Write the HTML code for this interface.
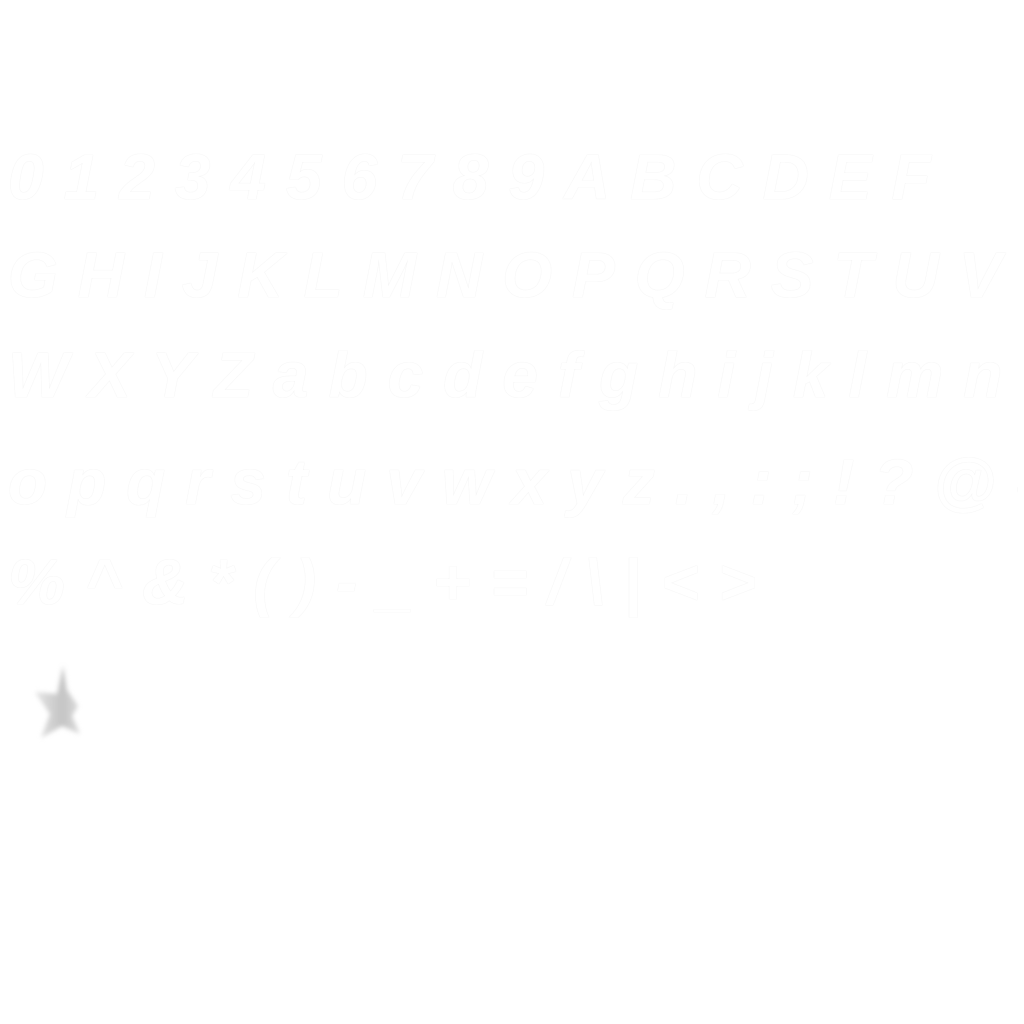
<!DOCTYPE html>
<html><head><meta charset="utf-8"><style>
html,body{margin:0;padding:0;background:#fff;width:1024px;height:1024px;overflow:hidden}
#w{position:absolute;left:0;top:0;width:1024px;height:1024px;overflow:hidden}
.t{position:absolute;left:8px;width:1010px;overflow:hidden;font-family:"Liberation Sans",sans-serif;font-weight:bold;font-style:italic;font-size:64px;color:#fff;letter-spacing:20px;white-space:nowrap;
text-shadow:0 0 1px #eee,0 0 1px #eee}
</style></head><body><div id="w">
<div class="t" style="top:140px">0123456789ABCDEF</div>
<div class="t" style="top:238px">GHIJKLMNOPQRSTUV</div>
<div class="t" style="top:338px">WXYZabcdefghijklmn</div>
<div class="t" style="top:445px">opqrstuvwxyz.,:;!?@#$</div>
<div class="t" style="top:545px">%^&amp;*()-_+=/\|&lt;&gt;</div>
<svg width="1024" height="1024" style="position:absolute;left:0;top:0">
<defs><filter id="b"><feGaussianBlur stdDeviation="2.5"/></filter>
<linearGradient id="g" x1="0" x2="1"><stop offset="0" stop-color="#e6e6e6"/><stop offset="0.6" stop-color="#c4c4c4"/><stop offset="1" stop-color="#dcdcdc"/></linearGradient></defs>
<path d="M63 666 L67 690 L78 706 L72 716 L80 734 L62 726 L41 738 L50 714 L35 692 L57 694 Z" fill="url(#g)" filter="url(#b)"/>
</svg>
</div></body></html>
